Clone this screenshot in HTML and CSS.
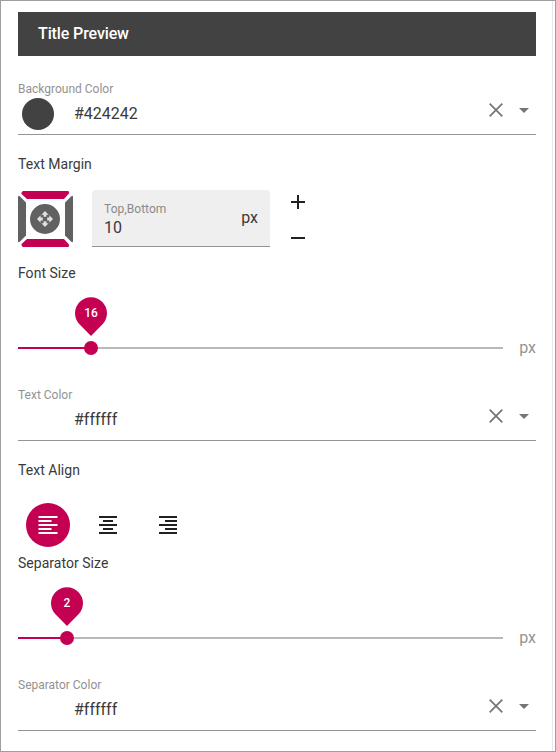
FILE: index.html
```html
<!DOCTYPE html>
<html lang="en">
<head>
<meta charset="utf-8">
<title>Title Preview</title>
<link rel="stylesheet" href="styles.css">
</head>
<body>
<main class="panel">
  <div class="content">
    <div class="preview">Title Preview</div>

    <div class="color-field first">
      <div class="field-label">Background Color</div>
      <div class="field-row">
        <span class="swatch dark"></span><span class="value">#424242</span>
        <svg class="clear" viewBox="0 0 16 16"><path d="M1.700 1.700l12.600 12.600M14.300 1.700L1.700 14.300"/></svg>
        <svg class="arrow" viewBox="0 0 10 5"><path d="M0 0h10L5 5z"/></svg>
      </div>
    </div>

    <h2 class="heading margin-heading">Text Margin</h2>
    <div class="margin-row">
      <svg class="sides" viewBox="0 0 55 56">
        <path class="on" d="M5 0h45q2 1 .5 3L46 8H9L3.500 3Q3 1 5 0z"/>
        <path class="on" d="M5 56h45q2-1 .5-3L46 48H9l-5.500 5Q3 55 5 56z"/>
        <path class="off" d="M0 5.500Q.5 4 2 5.500L8 11.500v33l-6 6Q.5 52 0 50.500z"/>
        <path class="off" d="M55 5.500Q54.500 4 53 5.500L47 11.500v33l6 6q1.500 1.500 2 0z"/>
        <circle class="off" cx="27" cy="28" r="15"/>
        <path class="move" transform="translate(27 28) scale(.727) translate(-12 -12)" d="M10 9h4V6h3l-5-5-5 5h3v3zm-1 1H6V7l-5 5 5 5v-3h3v-4zm14 2l-5-5v3h-3v4h3v3l5-5zm-9 3h-4v3H7l5 5 5-5h-3v-3z"/>
      </svg>
      <div class="number-box">
        <div class="number-text">
          <span class="number-label">Top,Bottom</span>
          <span class="number">10</span>
        </div>
        <span class="number-unit">px</span>
      </div>
      <div class="stepper">
        <svg viewBox="0 0 14 14"><path d="M0 7h14M7 0v14"/></svg>
        <svg viewBox="0 0 14 14"><path d="M0 7h14"/></svg>
      </div>
    </div>

    <h2 class="heading font-heading">Font Size</h2>
    <div class="slider-row">
      <div class="track">
        <div class="fill" style="width:15.05%">
          <span class="thumb"></span>
          <div class="pin"><svg viewBox="0 0 32 39"><path d="M16 39L4.700 27.600a16 16 0 1 1 22.600 0z"/></svg><span>16</span></div>
        </div>
      </div>
      <span class="unit">px</span>
    </div>

    <div class="color-field">
      <div class="field-label">Text Color</div>
      <div class="field-row">
        <span class="swatch white"></span><span class="value">#ffffff</span>
        <svg class="clear" viewBox="0 0 16 16"><path d="M1.700 1.700l12.600 12.600M14.300 1.700L1.700 14.300"/></svg>
        <svg class="arrow" viewBox="0 0 10 5"><path d="M0 0h10L5 5z"/></svg>
      </div>
    </div>

    <h2 class="heading align-heading">Text Align</h2>
    <div class="align-row">
      <button class="align active" aria-label="Left"><svg viewBox="0 0 20 18"><path d="M.5 1h19M.5 5h13M.5 9h19M.5 13h13M.5 17h19"/></svg></button>
      <button class="align" aria-label="Center"><svg viewBox="0 0 20 18"><path d="M1 1h18M5 5h10M1 9h18M5 13h10M1 17h18"/></svg></button>
      <button class="align" aria-label="Right"><svg viewBox="0 0 20 18"><path d="M1 1h18M7 5h12M1 9h18M7 13h12M1 17h18"/></svg></button>
    </div>

    <h2 class="heading separator-heading">Separator Size</h2>
    <div class="slider-row">
      <div class="track">
        <div class="fill" style="width:10.1%">
          <span class="thumb"></span>
          <div class="pin"><svg viewBox="0 0 32 39"><path d="M16 39L4.700 27.600a16 16 0 1 1 22.600 0z"/></svg><span>2</span></div>
        </div>
      </div>
      <span class="unit">px</span>
    </div>

    <div class="color-field">
      <div class="field-label">Separator Color</div>
      <div class="field-row">
        <span class="swatch white"></span><span class="value">#ffffff</span>
        <svg class="clear" viewBox="0 0 16 16"><path d="M1.700 1.700l12.600 12.600M14.300 1.700L1.700 14.300"/></svg>
        <svg class="arrow" viewBox="0 0 10 5"><path d="M0 0h10L5 5z"/></svg>
      </div>
    </div>
  </div>
</main>
</body>
</html>
```
FILE: styles.css
```css
* { box-sizing: border-box; }
body {
  margin: 0;
  background: #fff;
  color: #3a3a3a;
  font-family: Roboto, sans-serif;
  font-size: 16px;
}
svg { display: block; flex: none; }
.panel {
  height: 752px;
  padding-right: 2px;
  border: 1px solid #9e9e9e;
  overflow: hidden;
}
.content {
  height: 750px;
  padding: 11px 16px 0 17px;
  border-right: 1px solid #e8e8e8;
}
.preview {
  height: 44px;
  padding-left: 20px;
  background: #424242;
  color: #fff;
  font-weight: 500;
  line-height: 43px;
  letter-spacing: -.12px;
}
.color-field {
  height: 64px;
  padding-top: 10px;
  border-bottom: 1px solid #949494;
}
.first { margin-top: 15px; }
.field-label {
  height: 16px;
  color: #929292;
  font-size: 12px;
  line-height: 16px;
}
.field-row { display: flex; height: 34px; align-items: center; padding: 0 7px 0 4px; }
.swatch { width: 32px; height: 32px; border-radius: 50%; margin-right: 20px; }
.dark { background: #424242; }
.white { background: #fff; }
.value { padding-bottom: 2px; }
.clear {
  width: 16px;
  height: 16px;
  margin: -8px 15px 0 auto;
  fill: none;
  stroke: #757575;
  stroke-width: 1.7;
}
.arrow { width: 10px; height: 5px; margin-top: -8px; fill: #757575; }
.heading { height: 20px; margin: 0; font-size: 14px; font-weight: 400; line-height: 20px; letter-spacing: .03px; }
.margin-heading { margin-top: 19px; margin-bottom: 16px; }
.margin-row { display: flex; height: 57px; align-items: flex-end; }
.sides { width: 55px; height: 56px; }
.on { fill: #c40052; }
.off { fill: #616161; }
.move { fill: #e0e0e0; }
.number-box {
  display: flex;
  width: 178px;
  height: 57px;
  margin-left: 19px;
  padding: 0 12px;
  align-items: center;
  justify-content: space-between;
  background: #efefef;
  border-bottom: 1px solid #949494;
  border-radius: 4px 4px 0 0;
}
.number-text { display: flex; flex-direction: column; }
.number-label { color: #8a8a8a; font-size: 12px; line-height: 18px; letter-spacing: .05px; }
.number { line-height: 19px; }
.number-unit { line-height: 20px; padding-bottom: 1px; }
.stepper {
  display: flex;
  height: 57px;
  margin-left: 21px;
  padding-top: 5px;
  flex-direction: column;
  gap: 22px;
}
.stepper svg { width: 14px; height: 14px; stroke: #212121; stroke-width: 2; }
.font-heading { margin-top: 16px; margin-bottom: 1px; }
.slider-row { display: flex; height: 93px; align-items: flex-start; padding-top: 54px; }
.track { width: 485px; height: 2px; margin-top: 9px; background: #b9b9b9; }
.fill { position: relative; height: 2px; background: #c40052; }
.thumb {
  position: absolute;
  top: -6px;
  right: -7px;
  width: 14px;
  height: 14px;
  border-radius: 50%;
  background: #c40052;
}
.pin {
  position: absolute;
  right: -16px;
  bottom: 13px;
  width: 32px;
  height: 39px;
  color: #fff;
  font-size: 12px;
  font-weight: 500;
  line-height: 32px;
  text-align: center;
}
.pin svg { position: absolute; inset: 0; fill: #c40052; }
.pin span { position: relative; }
.unit { margin-left: auto; color: #949494; line-height: 19px; }
.align-heading { margin-top: 19px; }
.align-row { display: flex; gap: 16px; padding: 23px 8px 0; }
.align {
  display: flex;
  width: 44px;
  height: 44px;
  padding: 0;
  align-items: center;
  justify-content: center;
  border: 0;
  border-radius: 50%;
  background: transparent;
  color: #212121;
}
.active { background: #c40052; color: #fff; }
.align svg { width: 20px; height: 18px; stroke: currentColor; stroke-width: 2; }
.separator-heading { margin-top: 6px; margin-bottom: 1px; }
```
